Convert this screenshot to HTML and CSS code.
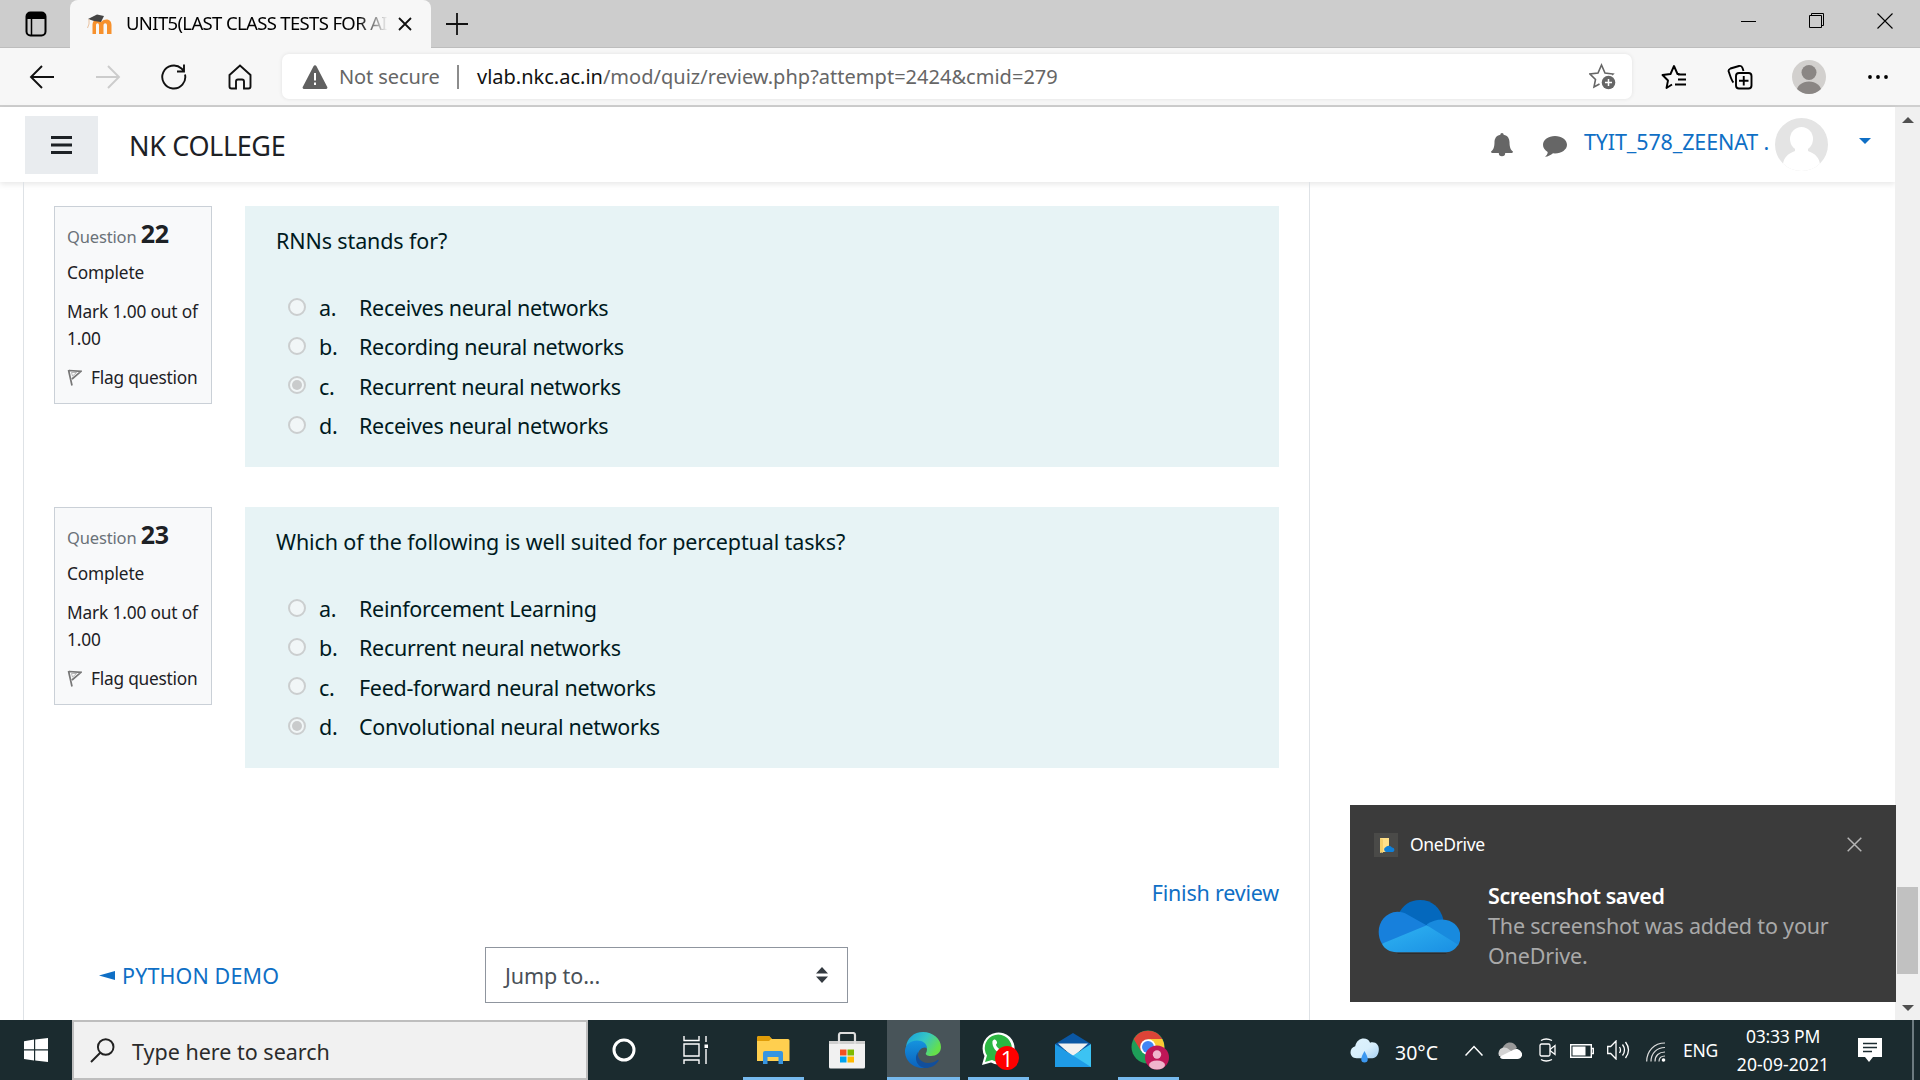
FILE: index.html
```html
<!DOCTYPE html>
<html lang="en">
<head>
<meta charset="utf-8">
<title>UNIT5(LAST CLASS TESTS FOR AI</title>
<link rel="stylesheet" href="styles.css">
</head>
<body>
<div class="tabbar">
  <svg class="tab-actions" width="22" height="26" viewBox="0 0 22 26"><rect x="1.5" y="1.500" width="19" height="23" rx="4" fill="none" stroke="#000" stroke-width="2"/><path d="M1.500 8V5a4 4 0 0 1 4-3.500h11a4 4 0 0 1 4 3.500v3z"/><path d="M6.500 8v16" stroke="#000" stroke-width="1.500"/></svg>
  <div class="tab">
    <svg class="favicon" width="26" height="20" viewBox="0 0 26 20"><path d="M5.500 20V11c0-6 7-7 9-3 3-4 10-3 10 3v9h-4.500v-8.500c0-3-3.500-3-3.500 0V20H12v-8.500c0-3-3-3-3 0V20z" fill="#f7912d"/><path d="M1 5 10 .5l7 1.500-3 6-7-1z" fill="#444"/><path d="M2 5v5l-1.500 4" stroke="#e9c2a0" fill="none"/></svg>
    <span class="tab-title">UNIT5(LAST CLASS TESTS FOR AI</span>
    <svg width="14" height="14" viewBox="0 0 14 14" class="tab-close"><path d="M1 1l12 12M13 1 1 13" stroke="#111" stroke-width="1.800"/></svg>
  </div>
  <svg class="newtab" width="22" height="22" viewBox="0 0 22 22"><path d="M11 0v22M0 11h22" stroke="#111" stroke-width="1.800"/></svg>
  <div class="window-buttons">
    <svg width="16" height="16" viewBox="0 0 16 16"><path d="M0 8.500h15" stroke="#000"/></svg>
    <svg width="16" height="16" viewBox="0 0 16 16" fill="none" stroke="#000"><path d="M.5 2.500h12v12H.5zM2.500 2.500v-2h12v12h-2"/></svg>
    <svg width="16" height="16" viewBox="0 0 16 16"><path d="M.5.500l15 15M15.500.500l-15 15" stroke="#000" stroke-width="1.100"/></svg>
  </div>
</div>
<div class="toolbar">
  <svg class="nav" width="26" height="24" viewBox="0 0 26 24"><path d="M13 1 2 12l11 11M2 12h23" fill="none" stroke="#111" stroke-width="1.900"/></svg>
  <svg class="nav" width="26" height="24" viewBox="0 0 26 24"><path d="M13 1l11 11-11 11M24 12H1" fill="none" stroke="#ccc" stroke-width="1.900"/></svg>
  <svg class="nav" width="26" height="26" viewBox="0 0 26 26"><path d="M24 10.500A11.500 11.500 0 1 1 20.500 4.500L23 7M23 .5V7.500h-7" fill="none" stroke="#111" stroke-width="1.900"/></svg>
  <svg class="nav" width="26" height="26" viewBox="0 0 26 26"><path d="M2.500 11 13 1.500 23.500 11v11.500a2 2 0 0 1-2 2h-4.500v-7a2 2 0 0 0-2-2h-4a2 2 0 0 0-2 2v7H4.500a2 2 0 0 1-2-2z" fill="none" stroke="#111" stroke-width="1.900"/></svg>
  <div class="address">
    <svg width="26" height="24" viewBox="0 0 26 24"><path d="M11.500 1.200a1.700 1.700 0 0 1 3 0L25 21.500a1.500 1.500 0 0 1-1.300 2.500H2.300A1.500 1.500 0 0 1 1 21.500z" fill="#606060"/><path d="M13 8v7.500M13 17.500v2.500" stroke="#fff" stroke-width="2"/></svg>
    <span class="not-secure">Not secure</span>
    <i class="divider"></i>
    <span class="host">vlab.nkc.ac.in</span><span class="path">/mod/quiz/review.php?attempt=2424&amp;cmid=279</span>
    <svg class="add-fav" width="27" height="27" viewBox="0 0 27 27"><path d="M10.500 21 5 24l1.500-7.500L1 11l8-1L12.500 2 16 10l8 1-1 1" fill="none" stroke="#666" stroke-width="1.600"/><circle cx="19.500" cy="19.500" r="6.800" fill="#666"/><path d="M19.500 16v7M16 19.500h7" stroke="#fff" stroke-width="1.500"/></svg>
  </div>
  <svg class="tool fav" width="26" height="26" viewBox="0 0 26 26"><path d="M11 20.500 5.500 24 7 16.500 1.500 11l8-1L13 2l3.500 8h2M17 10.500h8M17 15.500h8M14 20.500h11" fill="none" stroke="#000" stroke-width="1.900" stroke-linejoin="round"/></svg>
  <svg class="tool coll" width="26" height="26" viewBox="0 0 26 26"><path d="M6.500 18.500C4.500 17 3 11 1.500 7c0-1.500 1-2 2-2.500L12 2c2-.5 3 .5 3.500 2l1 3" fill="none" stroke="#000" stroke-width="1.900"/><rect x="9" y="9" width="15.500" height="15.500" rx="3" fill="#f7f7f7" stroke="#000" stroke-width="1.900"/><path d="M16.750 12v9.500M12 16.750h9.500" stroke="#000" stroke-width="1.900"/></svg>
  <svg class="tool person" width="34" height="34" viewBox="0 0 34 34"><defs><clipPath id="pc"><circle cx="17" cy="17" r="17"/></clipPath></defs><g clip-path="url(#pc)"><path d="M0 0h34v34H0z" fill="#d2d0ce"/><circle cx="17" cy="12.500" r="7.500" fill="#8a8684"/><ellipse cx="17" cy="32" rx="12.500" ry="10.500" fill="#8a8684"/></g></svg>
  <svg class="tool" width="20" height="6" viewBox="0 0 20 6"><circle cx="2" cy="3" r="1.900"/><circle cx="10" cy="3" r="1.900"/><circle cx="18" cy="3" r="1.900"/></svg>
</div>
<div class="viewport">
  <div class="page">
    <header class="site-header">
      <button class="menu-button"><svg width="21" height="18" viewBox="0 0 21 18"><path d="M0 1.500h21M0 9h21M0 16.500h21" stroke="#1d2125" stroke-width="3"/></svg></button>
      <span class="brand">NK COLLEGE</span>
      <svg class="bell" width="22" height="24" viewBox="0 0 22 24"><path d="M11 0c1 0 1.600.8 1.600 1.700C17 2.500 18.500 6 18.500 9c0 6 1.500 8 3.500 9.500-.2 1-.8 1.500-1.500 1.500h-6.300a3.200 3.200 0 0 1-6.400 0H1.500C.8 20 .2 19.500 0 18.500 2 17 3.500 15 3.500 9c0-3 1.500-6.500 5.900-7.300C9.400.8 10 0 11 0z" fill="#666"/></svg>
      <svg class="chat" width="24" height="21" viewBox="0 0 24 21"><path d="M12 0c6.600 0 12 3.900 12 8.700s-5.400 8.700-12 8.700l-2-.1C8 19 5 20.700 2 20.800c1.500-1.300 2.700-3 2.700-4.900C1.800 14.300 0 11.700 0 8.700 0 3.900 5.400 0 12 0z" fill="#666"/></svg>
      <span class="username">TYIT_578_ZEENAT .</span>
      <svg class="avatar" width="53" height="53" viewBox="0 0 53 53"><defs><clipPath id="av"><circle cx="26.500" cy="26.500" r="26.500"/></clipPath></defs><g clip-path="url(#av)"><path d="M0 0h53v53H0z" fill="#e4e4e4"/><ellipse cx="26.500" cy="21" rx="11.500" ry="12" fill="#fff"/><path d="M20 29v4C12 36 9 40 8 46v7h37v-7c-1-6-4-10-12-13v-4z" fill="#fff"/></g></svg>
      <i class="caret"></i>
    </header>
    <main class="region">
      <section class="question">
        <aside class="info">
          <h3>Question <b>22</b></h3>
          <p class="state">Complete</p><p class="mark">Mark 1.00 out of<br>1.00</p>
          <p class="flag"><svg width="15" height="17" viewBox="0 0 15 17"><path d="M1.500 1 5 16.500M2 1.500l12 .8L5 10" fill="none" stroke="#777" stroke-width="1.700"/><path d="M4.500 3.500h5L5.500 7z" fill="#fff" stroke="#999" stroke-width=".7"/></svg><span>Flag question</span></p>
        </aside>
        <div class="formulation">
          <p class="qtext"><span>RNNs stands for?</span></p>
          <div class="answer"><i class="radio"></i><span class="num">a.</span><span>Receives neural networks</span></div>
          <div class="answer"><i class="radio"></i><span class="num">b.</span><span>Recording neural networks</span></div>
          <div class="answer"><i class="radio on"></i><span class="num">c.</span><span>Recurrent neural networks</span></div>
          <div class="answer"><i class="radio"></i><span class="num">d.</span><span>Receives neural networks</span></div>
        </div>
      </section>
      <section class="question">
        <aside class="info">
          <h3>Question <b>23</b></h3>
          <p class="state">Complete</p><p class="mark">Mark 1.00 out of<br>1.00</p>
          <p class="flag"><svg width="15" height="17" viewBox="0 0 15 17"><path d="M1.500 1 5 16.500M2 1.500l12 .8L5 10" fill="none" stroke="#777" stroke-width="1.700"/><path d="M4.500 3.500h5L5.500 7z" fill="#fff" stroke="#999" stroke-width=".7"/></svg><span>Flag question</span></p>
        </aside>
        <div class="formulation">
          <p class="qtext"><span>Which of the following is well suited for perceptual tasks?</span></p>
          <div class="answer"><i class="radio"></i><span class="num">a.</span><span>Reinforcement Learning</span></div>
          <div class="answer"><i class="radio"></i><span class="num">b.</span><span>Recurrent neural networks</span></div>
          <div class="answer"><i class="radio"></i><span class="num">c.</span><span>Feed-forward neural networks</span></div>
          <div class="answer"><i class="radio on"></i><span class="num">d.</span><span>Convolutional neural networks</span></div>
        </div>
      </section>
      <div class="finish"><span>Finish review</span></div>
      <div class="activity-nav">
        <span class="prev"><svg width="16" height="9" viewBox="0 0 16 9"><path d="M0 4.500 16 0v9z" fill="#0f6fc5"/></svg><span>PYTHON DEMO</span></span>
        <div class="jump"><span>Jump to...</span><svg width="12" height="16" viewBox="0 0 12 16"><path d="M0 6.500 6 0l6 6.500zM0 9.500h12L6 16z" fill="#343a40"/></svg></div>
      </div>
    </main>
  </div>
  <div class="scrollbar"><i class="up"></i><i class="thumb"></i><i class="down"></i></div>
  <div class="toast">
    <div class="toast-head">
      <svg width="24" height="24" viewBox="0 0 24 24"><path d="M0 0h24v24H0z" fill="#4a4a48"/><path d="M6 5h9v14H8l-2 1z" fill="#ffe08a"/><path d="M6 5l3 1.500V20l-3-1z" fill="#f5cf6a"/><path d="M12 19a2.600 2.600 0 0 1-.5-4.800 4 4 0 0 1 6.500.3c2.600 0 3.300 3.500 1 4.500z" fill="#0f7fd8"/></svg>
      <span class="app">OneDrive</span>
      <svg class="toast-close" width="15" height="15" viewBox="0 0 15 15"><path d="M.7.700l13.600 13.600M14.300.700.7 14.300" stroke="#b5b5b5" stroke-width="1.500"/></svg>
    </div>
    <div class="toast-body">
      <svg width="82" height="54" viewBox="0 0 84 58" preserveAspectRatio="none"><defs><linearGradient id="od" x1="0" y1="0" x2="1" y2="1"><stop offset="0" stop-color="#2fb4f2"/><stop offset="1" stop-color="#1a8fe3"/></linearGradient></defs><path d="M20 17C25 5 33 0 43 0c12 0 21 8 24 21L48 30z" fill="#0468bd"/><path d="M4 47C-4 33 3 13 20 12.500c4 0 7 1 10 3L51 28 30 46z" fill="#1780dc"/><path d="M50 26c5-3 10-5 16-5 17 1 22 17 16 28L60 44z" fill="#188ade"/><path d="M4 47 50 27l32 21c-3 5-7 8-12 8H19C12 56 7 53 4 47z" fill="url(#od)"/><path d="M20 57.500h50" stroke="#2c2c2c" stroke-width="1"/></svg>
      <div class="toast-text"><b>Screenshot saved</b><span>The screenshot was added to your</span><span>OneDrive.</span></div>
    </div>
  </div>
</div>
<footer class="taskbar">
  <div class="start"><svg width="24" height="24" viewBox="0 0 24 24" fill="#fff"><path d="M0 3.200 10 1.600v9.700H0zM11.200 1.400 24 0v11.300H11.200zM0 12.500h10v9.900L0 21zM11.200 12.500H24V24l-12.800-1.600z"/></svg></div>
  <div class="search"><svg width="25" height="25" viewBox="0 0 25 25"><circle cx="15.700" cy="9" r="7.800" fill="none" stroke="#222" stroke-width="1.900"/><path d="M10.500 14.500 1 24" stroke="#222" stroke-width="1.900"/></svg><span>Type here to search</span></div>
  <div class="slot cortana"><svg width="24" height="24" viewBox="0 0 24 24"><circle cx="12" cy="12" r="10" fill="none" stroke="#fff" stroke-width="3"/></svg></div>
  <div class="slot taskview"><svg width="26" height="28" viewBox="0 0 26 28" fill="none" stroke="#fff" stroke-width="1.400"><path d="M1 0v4.500h15V0M1 28v-4h15v4M1 8h15v12H1zM23 0v6M23 13v15"/><path d="M21.500 8.500h3.500v3.500h-3.500z" fill="#fff" stroke="none"/></svg></div>
  <div class="slot explorer running"><svg width="33" height="28" viewBox="0 0 33 28"><path d="M0 2a2 2 0 0 1 2-2h10l3 3h16a1.500 1.500 0 0 1 1.500 1.500V25H0z" fill="#ffcf4f"/><path d="M0 2a2 2 0 0 1 2-2h10l2.500 2.500L12 5H0z" fill="#e09c08"/><path d="M6 28V17a2 2 0 0 1 2-2h16a2 2 0 0 1 2 2v11h-4.500v-7h-11v7z" fill="#3795e0"/></svg></div>
  <div class="slot store"><svg width="36" height="37" viewBox="0 0 36 37"><path d="M0 9h36v26a1.500 1.500 0 0 1-1.500 1.500h-33A1.500 1.500 0 0 1 0 35z" fill="#f1f1f1"/><path d="M0 9h36v3H0z" fill="#cfcfcf"/><path d="M10 12V3a2 2 0 0 1 2-2h12a2 2 0 0 1 2 2v9" fill="none" stroke="#ddd" stroke-width="2.200"/><path d="M11 17.500h6.500v6H11z" fill="#f25022"/><path d="M18.500 17.500H25v6h-6.500z" fill="#7fba00"/><path d="M11 24.500h6.500v6H11z" fill="#00a4ef"/><path d="M18.500 24.500H25v6h-6.500z" fill="#ffb900"/></svg></div>
  <div class="slot edge running"><svg width="36" height="36" viewBox="0 0 36 36"><defs><linearGradient id="eg" x1="0" y1="0" x2="1" y2=".5"><stop offset=".1" stop-color="#1aa5dc"/><stop offset=".55" stop-color="#36c6c4"/><stop offset="1" stop-color="#65e04a"/></linearGradient><linearGradient id="eb" x1="0" y1="0" x2="0" y2="1"><stop offset="0" stop-color="#1593de"/><stop offset="1" stop-color="#0b62bd"/></linearGradient></defs><path d="M1 15C2 6 9 0 18 0c10 0 18 7 18 15 0 6-5 9-10 9-4 0-6-1.500-5-3 3-5-1-10-7-10-5 0-10 2-13 4z" fill="url(#eg)"/><path d="M0 18C1 12 6 8.500 12 8.500c6 0 10 3.500 10 7.500-4-2-9 2-9 7 0 7 6 12 12 11.500C13 40-1 31 0 18z" fill="url(#eb)"/><path d="M13 20c-1.500 5 3 11 10 11 4 0 7-1 9.500-3 1-.7 1.500 0 1 1C30 34 25 36 21 36c-8 0-13-9-8-16z" fill="#124f9c"/></svg></div>
  <div class="slot whatsapp running"><svg width="38" height="46" viewBox="0 0 38 46"><path d="M1 38 3.500 29A16 16 0 1 1 10 35.500z" fill="#fff"/><path d="M4 35l2-6.500A13.500 13.500 0 1 1 11 33z" fill="#2cb742"/><path d="M11.500 14c1.500-2.500 3.500-2 4.500 1 .5 1.500-1 2-1 3 1 2.500 3 4 5 5l2-2 4 2.500c0 3-3 4-5.500 3.500C16 26 10.500 20 11.500 14z" fill="#fff"/></svg><span class="badge">1</span></div>
  <div class="slot mail"><svg width="36" height="34" viewBox="0 0 36 34"><path d="M0 11 18 0l18 11-4 6H4z" fill="#0a57a4"/><path d="M3 10.500h30L18 24z" fill="#f1f1f1"/><path d="M36 11v23H0z" fill="#3cc3f3"/><path d="M0 11l18 11.500L36 34H0z" fill="#1f9be6"/></svg></div>
  <div class="slot chrome running"><svg width="40" height="46" viewBox="0 0 40 46"><circle cx="17" cy="20" r="16.500" fill="#1e9e58"/><path d="M2.700 12A16.500 16.500 0 0 1 31.300 12H17L10 24z" fill="#dd4437"/><path d="M17 12h14.300A16.500 16.500 0 0 1 17 36.500L24 24z" fill="#fcc934"/><circle cx="17" cy="20" r="7.800" fill="#fff"/><circle cx="17" cy="20" r="6" fill="#4285f4"/><circle cx="26" cy="30.500" r="12" fill="#bf1657"/><circle cx="26" cy="27.500" r="4.200" fill="#f0b5cc"/><ellipse cx="26" cy="38" rx="8" ry="4.500" fill="#f0b5cc"/></svg></div>
  <div class="tray">
    <svg class="weather" width="31" height="25" viewBox="0 0 31 27"><defs><linearGradient id="wc" x1="0" y1="0" x2="1" y2="1"><stop offset="0" stop-color="#dff3fd"/><stop offset=".55" stop-color="#d8effc"/><stop offset="1" stop-color="#a6d0f2"/></linearGradient></defs><path d="M7 22C-1 22-2 11 5.500 9 7-1 19-2 21.500 5 28 3.500 31 8 31 12c0 6-3 10-7 10z" fill="url(#wc)"/><path d="M15.500 14c2 4 3.500 6 3.500 9a3.500 3.500 0 0 1-7 0c0-3 1.500-5 3.500-9z" fill="#3c98f0"/></svg>
    <span class="temp">30°C</span>
    <svg class="chev" width="18" height="11" viewBox="0 0 18 11"><path d="M.5 10.500 9 1.500l8.500 9" fill="none" stroke="#fff" stroke-width="1.500"/></svg>
    <svg class="cloud" width="24" height="17" viewBox="0 0 24 17"><path d="M4 8C6-1 16-2 19 6l-7 5z" fill="#999"/><path d="M1 14C-1 8 4 4 9 6l11 8z" fill="#d3d3d3"/><path d="M2 14.500 15 8c6-4 11 4 8.500 6.500-.5 1.500-2 2.500-4 2.500H5c-2 0-3-1-3-2.500z" fill="#fff"/></svg>
    <svg class="meet" width="17" height="24" viewBox="0 0 17 24"><rect x="1" y="6" width="10" height="12" rx="1.500" fill="none" stroke="#fff" stroke-width="1.300"/><path d="M11 11.500l5-4v9l-5-4M2 2.500q5-3 11 0M2 21.500q5 3 11 0" fill="none" stroke="#fff" stroke-width="1.300"/></svg>
    <svg class="battery" width="24" height="14" viewBox="0 0 24 14"><path d="M.7.700h20.600v12.600H.7zM21.500 4.500h1.800v5h-1.800" fill="none" stroke="#fff" stroke-width="1.400"/><path d="M2.500 2.500h13v9h-13z" fill="#fff"/></svg>
    <svg class="volume" width="24" height="20" viewBox="0 0 24 20"><path d="M.7 6.500h3L9 1v18l-5.300-5.500h-3zM12.500 7q2 3 0 6M15.500 4.500q4 5.500 0 11M18.500 2q6 8 0 16" fill="none" stroke="#fff" stroke-width="1.300"/></svg>
    <svg class="wifi" width="20" height="20" viewBox="0 0 20 20"><path d="M.7 19.500C.7 9 8 1 19 1M5 19.500C5 11 11 5.500 19 5.500M9 19.500C9 13.500 13 10 19 10M13 19.500c0-3.500 2.500-5.500 6-5.500" fill="none" stroke="#ddd" stroke-width="1.200"/><circle cx="17.500" cy="18" r="1.800" fill="#fff"/></svg>
    <span class="lang">ENG</span>
    <div class="clock"><span class="time">03:33 PM</span><span class="date">20-09-2021</span></div>
    <svg class="notif" width="24" height="24" viewBox="0 0 24 24"><path d="M0 0h24v19H15l-4 5-4-5H0z" fill="#fff"/><path d="M5 5.500h14M5 9.500h14M5 13.500h9" stroke="#1c2c31" stroke-width="1.300"/></svg>
    <i class="peek"></i>
  </div>
</footer>
</body>
</html>
```
FILE: styles.css
```css
* { box-sizing: border-box; }
body { margin: 0; width: 1920px; height: 1080px; overflow: hidden; display: flex; flex-direction: column; font-family: "Noto Sans", "Open Sans", sans-serif; font-size: 21.5px; color: #1d2125; background: #fff; }
p, h3 { margin: 0; }
svg { display: block; flex: none; }
span, b { white-space: nowrap; }

.tabbar { height: 48px; flex: none; background: #cdcdcd; display: flex; align-items: center; border-bottom: 1px solid #bdbdbd; }
.tab-actions { margin: 0 23px 0 25px; }
.tab { width: 361px; height: 48px; align-self: flex-start; background: #f7f7f7; border-radius: 8px 8px 0 0; display: flex; align-items: center; padding-left: 17px; }
.tab-title { width: 262px; margin-left: 13px; margin-bottom: 3px; font-size: 18.5px; letter-spacing: -0.65px; color: #000; -webkit-mask-image: linear-gradient(90deg, #000 232px, transparent 262px); mask-image: linear-gradient(90deg, #000 232px, transparent 262px); }
.tab-close { margin-left: 10px; }
.newtab { margin-left: 15px; }
.window-buttons { margin-left: auto; display: flex; gap: 52px; padding-right: 27px; margin-bottom: 5px; }

.toolbar { height: 59px; flex: none; background: #f7f7f7; border-bottom: 2px solid #cfcfcf; display: flex; align-items: center; padding-left: 29px; }
.nav { margin-right: 40px; width: 26px; }
.address { width: 1350px; height: 45px; margin-left: -11px; background: #fff; border-radius: 7px; box-shadow: 0 0 4px rgba(0, 0, 0, .09); display: flex; align-items: center; padding-left: 20px; font-size: 20px; color: #666; }
.not-secure { margin-left: 11px; width: 101px; letter-spacing: -0.1px; }
.divider { width: 2px; height: 24px; background: #8c8c8c; margin: 0 18px 0 17px; }
.host { color: #111; }
.path { letter-spacing: 0.02px; }
.add-fav { margin-left: auto; margin-right: 16px; }
.tool.fav { margin-left: 29px; }
.tool.coll { margin-left: 40px; }
.tool.person { margin: 0 42px 0 39px; }

.viewport { height: 913px; flex: none; display: flex; position: relative; }
.page { width: 1895px; display: flex; flex-direction: column; }
.site-header { height: 75px; flex: none; display: flex; align-items: center; box-shadow: 0 2px 6px rgba(0, 0, 0, .1); padding-left: 25px; }
.menu-button { width: 73px; height: 58px; border: 0; padding: 0; background: #e9ecef; display: flex; align-items: center; justify-content: center; }
.brand { font-size: 27px; margin-left: 31px; margin-top: 2px; letter-spacing: -0.35px; }
.bell { margin-left: auto; }
.chat { margin: 4px 17px 0 30px; }
.username { width: 186px; color: #0f6fc5; margin-top: -6px; letter-spacing: -0.13px; }
.avatar { margin-left: 5px; margin-bottom: 1px; }
.caret { border: 6.500px solid transparent; border-top-color: #0f6fc5; border-bottom: 0; margin: 0 24px 7px 31px; }

.region { margin-left: 23px; width: 1287px; flex: 1; border-left: 1px solid #dee2e6; border-right: 1px solid #dee2e6; padding: 24px 30px 0; }
.question { display: flex; gap: 33px; margin-bottom: 40px; height: 261px; }
.info { width: 158px; height: 198px; background: #f8f9fa; border: 1px solid #cad0d7; padding: 9px 0 0 12px; font-size: 17.300px; letter-spacing: -0.15px; line-height: 27px; }
.info h3 { font-size: 16.5px; font-weight: 400; color: #6a7178; line-height: 35px; }
.info h3 b { font-size: 25px; color: #1d2125; }
.info .state { margin: 5px 0 12px; }
.info .mark { margin-bottom: 12px; }
.flag { display: flex; align-items: center; gap: 9px; letter-spacing: -0.22px; }
.formulation { width: 1034px; height: 261px; background: #e7f3f5; color: #001a1e; padding: 19px 31px; }
.qtext { line-height: 32px; margin-bottom: 31px; letter-spacing: -0.12px; }
.answer { height: 39.3px; display: flex; align-items: center; padding-left: 12px; letter-spacing: -0.3px; }
.radio { width: 18px; height: 18px; border: 2px solid #cbcecf; border-radius: 50%; background: #f1f6f7; margin: 0 13px 2px 0; display: grid; place-items: center; }
.radio.on::after { content: ""; width: 10px; height: 10px; border-radius: 50%; background: #c9cbcc; }
.num { width: 40px; }
.finish { margin-top: 108px; height: 32px; display: flex; justify-content: flex-end; align-items: center; color: #0f6fc5; letter-spacing: -0.2px; }
.activity-nav { display: flex; margin-top: 39px; padding-left: 45px; }
.prev { display: flex; align-items: center; gap: 7px; width: 386px; color: #0f6fc5; letter-spacing: 0.12px; }
.jump { width: 363px; height: 56px; border: 1px solid #8f959e; display: flex; align-items: center; justify-content: space-between; padding: 0 19px; color: #495057; letter-spacing: -0.1px; }

.scrollbar { width: 25px; background: #f0f0f0; display: flex; flex-direction: column; align-items: center; padding: 10px 0 9px; }
.up { border: 6px solid transparent; border-bottom-color: #505050; border-top: 0; }
.thumb { width: 21px; height: 87px; background: #c1c1c1; margin: 764px 0 auto; }
.down { border: 6px solid transparent; border-top-color: #505050; border-bottom: 0; }

.toast { position: absolute; left: 1350px; top: 698px; width: 546px; height: 197px; background: #3b3b3b; color: #fff; padding: 28px 34px 0 24px; }
.toast-head { display: flex; align-items: center; height: 24px; }
.app { margin: 0 0 2px 12px; font-size: 17.5px; letter-spacing: -0.35px; }
.toast-close { margin-left: auto; margin-bottom: 2px; }
.toast-body { display: flex; margin-top: 24px; padding-left: 4px; }
.toast-body > svg { margin-top: 19px; margin-right: 28px; }
.toast-text { display: flex; flex-direction: column; line-height: 30px; letter-spacing: -0.18px; }
.toast-text b { font-weight: 600; letter-spacing: -0.42px; }
.toast-text span { color: #a9a9a9; }

.taskbar { height: 60px; flex: none; background: #1b2b2f; display: flex; }
.start { width: 72px; display: flex; align-items: center; justify-content: center; }
.search { width: 516px; border: 2px solid #bebebe; background: #f1f1f1; display: flex; align-items: center; padding-left: 16px; color: #2b2b2b; }
.search span { margin-left: 17px; padding-top: 2px; }
.slot { display: flex; align-items: center; justify-content: center; position: relative; }
.running { border-bottom: 3px solid #76b9ed; padding-top: 3px; }
.cortana { width: 72px; }
.taskview { width: 72px; margin-right: 11px; }
.explorer { width: 61px; }
.store { width: 60px; margin: 0 10px 0 13px; }
.edge { width: 73px; background: #485459; margin-right: 8px; padding-right: 1px; }
.whatsapp { width: 61px; justify-content: flex-start; padding-left: 13px; }
.badge { position: absolute; left: 27px; top: 26px; width: 24px; height: 24px; border-radius: 50%; background: #f00; color: #fff; font: 22px/24px "Open Sans", sans-serif; text-align: center; }
.mail { width: 61px; margin: 0 14px; padding-right: 2px; }
.chrome { width: 61px; justify-content: flex-start; padding-left: 13px; }
.tray { margin-left: auto; display: flex; align-items: center; color: #fff; font-size: 17.5px; width: 571px; }
.temp { margin-left: 15px; width: 70px; font-size: 19.5px; padding-top: 4px; }
.cloud { margin: 0 17px 0 15px; }
.battery { margin: 2px 13px 0 14px; }
.wifi { margin: 4px 17px 0 15px; }
.lang { width: 44px; letter-spacing: -0.3px; }
.clock { width: 112px; display: flex; flex-direction: column; align-items: center; line-height: 28px; }
.time { letter-spacing: -0.2px; }
.date { letter-spacing: 0.1px; }
.notif { margin-left: 19px; margin-right: 30px; }
.peek { width: 2px; height: 60px; background: #6d7b80; }
```
